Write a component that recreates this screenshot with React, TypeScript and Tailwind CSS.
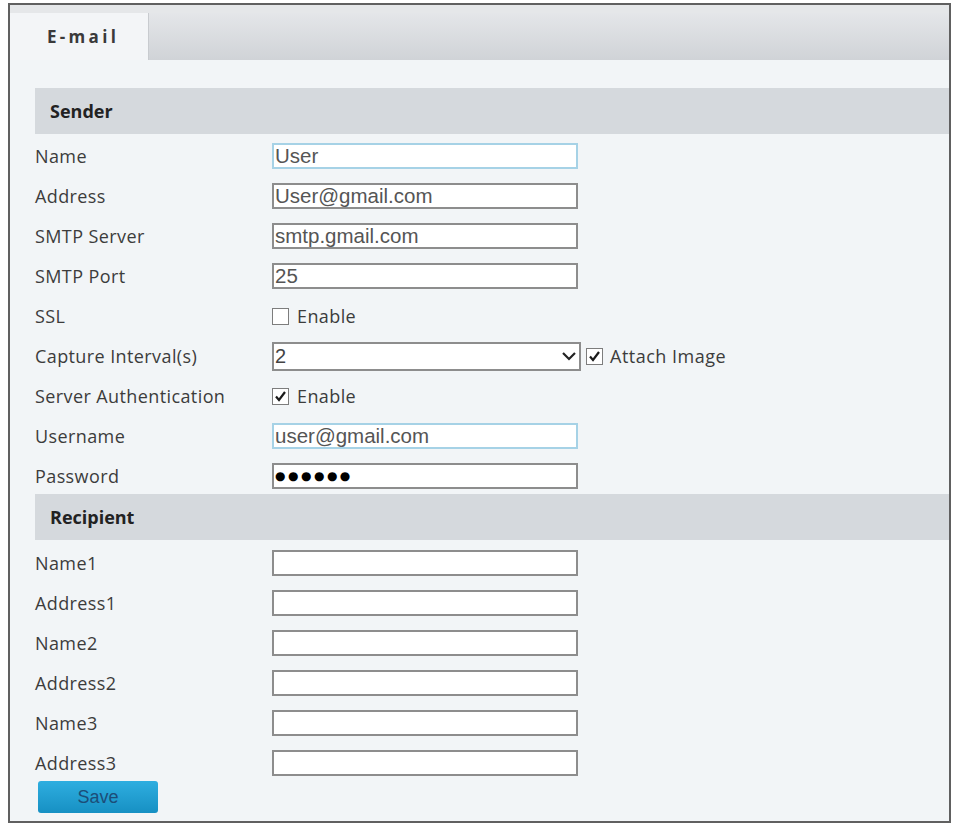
import React from "react";

const labelFont = { fontFamily: '"Open Sans", "Noto Sans", sans-serif' };

function Field({ value, focus, dots }: { value?: string; focus?: boolean; dots?: boolean }) {
  return (
    <div
      className={
        "h-[26px] w-[306px] bg-white border-2 flex items-center pl-[1px] overflow-hidden " +
        (focus ? "border-[#a6d2e6]" : "border-[#8d8d8d]")
      }
    >
      {dots ? (
        <span className="text-[12px] tracking-[2.5px] text-black" style={{ fontFamily: '"DejaVu Sans", sans-serif' }}>
          ●●●●●●
        </span>
      ) : (
        <span className="text-[20.5px] leading-[22px] text-[#555]" style={{ fontFamily: '"Liberation Sans", Arial, sans-serif' }}>
          {value}
        </span>
      )}
    </div>
  );
}

function Check({ checked }: { checked?: boolean }) {
  return (
    <div className="w-[17px] h-[17px] border border-[#7d7d7d] bg-white flex items-center justify-center shrink-0">
      {checked && (
        <svg width="13" height="13" viewBox="0 0 13 13">
          <path d="M2 6.5 L5 10 L11 2" fill="none" stroke="#1a1a1a" strokeWidth="2.2" />
        </svg>
      )}
    </div>
  );
}

function Row({ label, children }: { label: string; children?: React.ReactNode }) {
  return (
    <div className="h-10 flex items-center">
      <div className="w-[237px] text-[18px] tracking-[0.4px] text-[#3c3c3c]" style={labelFont}>
        {label}
      </div>
      {children}
    </div>
  );
}

function Header({ title }: { title: string }) {
  return (
    <div className="h-[46px] bg-[#d5d9dd] flex items-center pl-[15px]">
      <span className="text-[18px] font-bold text-[#222]" style={labelFont}>
        {title}
      </span>
    </div>
  );
}

export default function App() {
  return (
    <div className="min-h-screen bg-white pt-[3px] pl-[8px]">
      <div className="w-[943px] h-[820px] border-2 border-[#606060] bg-[#f2f5f7] flex flex-col">
        <div className="h-[8px] bg-[#e5e7e9]" />
        <div className="flex h-[47px]">
          <div className="w-[138px] bg-[#f3f5f7] flex items-center pl-[37px]">
            <span className="text-[17px] font-bold tracking-[3.3px] text-[#3a3a3a]" style={labelFont}>
              E-mail
            </span>
          </div>
          <div className="flex-1 bg-gradient-to-b from-[#e4e6e9] to-[#d0d3d7] border-l border-[#c8cbcf]" />
        </div>
        <div className="pl-[25px] pt-[28px] flex flex-col">
          <Header title="Sender" />
          <div className="pt-[2px]">
            <Row label="Name">
              <Field value="User" focus />
            </Row>
            <Row label="Address">
              <Field value="User@gmail.com" />
            </Row>
            <Row label="SMTP Server">
              <Field value="smtp.gmail.com" />
            </Row>
            <Row label="SMTP Port">
              <Field value="25" />
            </Row>
            <Row label="SSL">
              <div className="flex items-center gap-[8px]">
                <Check />
                <span className="text-[18px] tracking-[0.4px] text-[#3c3c3c]" style={labelFont}>Enable</span>
              </div>
            </Row>
            <Row label="Capture Interval(s)">
              <div className="flex items-center">
                <div className="h-[29px] w-[309px] bg-white border-2 border-[#8d8d8d] flex items-center justify-between pl-[1px] pr-[2px]">
                  <span className="text-[20px] text-[#444]" style={{ fontFamily: '"Liberation Sans", Arial, sans-serif' }}>2</span>
                  <svg width="16" height="12" viewBox="0 0 16 12">
                    <path d="M2 3 L8 9 L14 3" fill="none" stroke="#222" strokeWidth="2.2" />
                  </svg>
                </div>
                <div className="ml-[5px] flex items-center gap-[7px]">
                  <Check checked />
                  <span className="text-[18px] tracking-[0.5px] text-[#3c3c3c]" style={labelFont}>Attach Image</span>
                </div>
              </div>
            </Row>
            <Row label="Server Authentication">
              <div className="flex items-center gap-[8px]">
                <Check checked />
                <span className="text-[18px] tracking-[0.4px] text-[#3c3c3c]" style={labelFont}>Enable</span>
              </div>
            </Row>
            <Row label="Username">
              <Field value="user@gmail.com" focus />
            </Row>
            <Row label="Password">
              <Field dots />
            </Row>
          </div>
          <div className="-mt-[2px]">
            <Header title="Recipient" />
          </div>
          <div className="pt-[3px]">
            {["Name1", "Address1", "Name2", "Address2", "Name3", "Address3"].map((l) => (
              <Row key={l} label={l}>
                <Field value="" />
              </Row>
            ))}
          </div>
          <div className="-mt-[2px] pl-[3px]">
            <button
              className="h-[32px] w-[120px] rounded-[3px] bg-gradient-to-b from-[#2eaee0] to-[#1690c3] text-[18px] text-[#1c4d78] flex items-center justify-center"
              style={{ fontFamily: '"Liberation Sans", Arial, sans-serif' }}
            >
              Save
            </button>
          </div>
        </div>
      </div>
    </div>
  );
}
